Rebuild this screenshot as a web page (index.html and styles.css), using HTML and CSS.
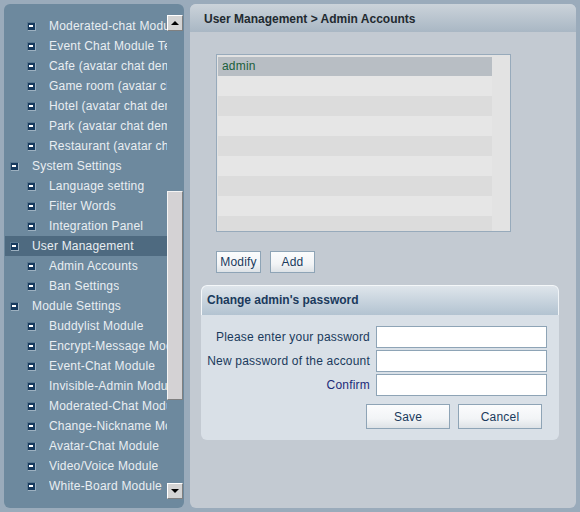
FILE: index.html
```html
<!DOCTYPE html>
<html>
<head>
<meta charset="utf-8">
<link rel="stylesheet" href="styles.css">
</head>
<body>
<div class="page">
  <div class="side">
    <div class="tree">
      <div class="row l2"><span class="ico"></span><span class="lbl">Moderated-chat Module Test</span></div>
      <div class="row l2"><span class="ico"></span><span class="lbl">Event Chat Module Test</span></div>
      <div class="row l2"><span class="ico"></span><span class="lbl">Cafe (avatar chat demo)</span></div>
      <div class="row l2"><span class="ico"></span><span class="lbl">Game room (avatar chat demo)</span></div>
      <div class="row l2"><span class="ico"></span><span class="lbl">Hotel (avatar chat demo)</span></div>
      <div class="row l2"><span class="ico"></span><span class="lbl">Park (avatar chat demo)</span></div>
      <div class="row l2"><span class="ico"></span><span class="lbl">Restaurant (avatar chat demo)</span></div>
      <div class="row l1"><span class="ico"></span><span class="lbl">System Settings</span></div>
      <div class="row l2"><span class="ico"></span><span class="lbl">Language setting</span></div>
      <div class="row l2"><span class="ico"></span><span class="lbl">Filter Words</span></div>
      <div class="row l2"><span class="ico"></span><span class="lbl">Integration Panel</span></div>
      <div class="row l1 sel"><span class="ico"></span><span class="lbl">User Management</span></div>
      <div class="row l2"><span class="ico"></span><span class="lbl">Admin Accounts</span></div>
      <div class="row l2"><span class="ico"></span><span class="lbl">Ban Settings</span></div>
      <div class="row l1"><span class="ico"></span><span class="lbl">Module Settings</span></div>
      <div class="row l2"><span class="ico"></span><span class="lbl">Buddylist Module</span></div>
      <div class="row l2"><span class="ico"></span><span class="lbl">Encrypt-Message Module</span></div>
      <div class="row l2"><span class="ico"></span><span class="lbl">Event-Chat Module</span></div>
      <div class="row l2"><span class="ico"></span><span class="lbl">Invisible-Admin Module</span></div>
      <div class="row l2"><span class="ico"></span><span class="lbl">Moderated-Chat Module</span></div>
      <div class="row l2"><span class="ico"></span><span class="lbl">Change-Nickname Module</span></div>
      <div class="row l2"><span class="ico"></span><span class="lbl">Avatar-Chat Module</span></div>
      <div class="row l2"><span class="ico"></span><span class="lbl">Video/Voice Module</span></div>
      <div class="row l2"><span class="ico"></span><span class="lbl">White-Board Module</span></div>
    </div>
    <div class="sbar">
      <div class="sbtn"><span class="arr up"></span></div>
      <div class="strack-top"></div>
      <div class="thumb"></div>
      <div class="strack-rest"></div>
      <div class="sbtn"><span class="arr down"></span></div>
    </div>
  </div>
  <div class="main">
    <div class="main-head">User Management &gt; Admin Accounts</div>
    <div class="main-body">
      <div class="listbox">
        <div class="lrow selrow">admin</div>
        <div class="lrow a"></div>
        <div class="lrow b"></div>
        <div class="lrow a"></div>
        <div class="lrow b"></div>
        <div class="lrow a"></div>
        <div class="lrow b"></div>
        <div class="lrow a"></div>
        <div class="lrow b last"></div>
      </div>
      <div class="btnrow">
        <button class="btn modify">Modify</button>
        <button class="btn add">Add</button>
      </div>
      <div class="box">
        <div class="box-head">Change admin's password</div>
        <div class="box-body">
          <div class="form">
            <label class="flabel">Please enter your password</label>
            <input class="finput" type="password">
            <label class="flabel">New password of the account</label>
            <input class="finput" type="password">
            <label class="flabel confirm">Confirm</label>
            <input class="finput" type="password">
          </div>
          <div class="actions">
            <button class="btn big">Save</button>
            <button class="btn big">Cancel</button>
          </div>
        </div>
      </div>
    </div>
  </div>
</div>
</body>
</html>
```

FILE: styles.css
```css
html, body {
  margin: 0;
  padding: 0;
}
body {
  background: #9aabbb;
  font-family: "Liberation Sans", Arial, sans-serif;
  font-size: 12px;
  width: 580px;
  height: 512px;
  overflow: hidden;
}
.page {
  display: flex;
  gap: 6px;
  padding: 4px;
  height: 504px;
}
.side {
  width: 180px;
  height: 504px;
  background: #6d899e;
  border-radius: 6px;
  display: flex;
  padding-left: 1px;
  box-sizing: border-box;
}
.tree {
  width: 162px;
  overflow: hidden;
  padding-top: 12px;
}
.row {
  height: 20px;
  display: flex;
  align-items: center;
  white-space: nowrap;
  color: #e9eef2;
  letter-spacing: 0.2px;
}
.row.sel {
  background: #4e6a80;
}
.ico {
  position: relative;
  flex: none;
  width: 8px;
  height: 8px;
  background: #173a5e;
  box-shadow: inset 1px 1px 0 #5a7890, 1px 1px 0 #9cb0c0;
  margin-top: -1px;
}
.ico::after {
  content: "";
  position: absolute;
  left: 2px;
  top: 3px;
  width: 4px;
  height: 2px;
  background: #ffffff;
}
.l1 .ico { margin-left: 5px; margin-right: 14px; }
.l2 .ico { margin-left: 22px; margin-right: 14px; }
.lbl { overflow: hidden; }

.sbar {
  width: 16px;
  display: flex;
  flex-direction: column;
  padding-top: 11px;
  padding-bottom: 9px;
}
.sbtn {
  height: 16px;
  background: #d4d4d4;
  box-sizing: border-box;
  border: 1px solid;
  border-color: #ffffff #808080 #808080 #ffffff;
  display: flex;
  align-items: center;
  justify-content: center;
}
.arr {
  width: 0;
  height: 0;
  border-left: 4px solid transparent;
  border-right: 4px solid transparent;
}
.arr.up { border-bottom: 4px solid #000; }
.arr.down { border-top: 4px solid #000; }
.strack-top { height: 160px; }
.thumb {
  height: 209px;
  background: #d4d2d4;
  box-sizing: border-box;
  border: 1px solid;
  border-color: #f4f4f4 #808080 #808080 #f4f4f4;
}
.strack-rest { flex: 1; }

.main {
  flex: 1;
  height: 504px;
  background: #c3cad2;
  border-radius: 6px;
  display: flex;
  flex-direction: column;
  overflow: hidden;
}
.main-head {
  height: 28px;
  box-sizing: border-box;
  padding-top: 1px;
  line-height: 28px;
  padding-left: 14px;
  font-weight: bold;
  font-size: 12px;
  color: #222a30;
  background: linear-gradient(#cbd3da, #a9b7c4);
}
.main-body {
  padding: 22px 0 0 26px;
}
.listbox {
  width: 295px;
  height: 178px;
  box-sizing: border-box;
  border: 1px solid #97aabb;
  background: #e3e3e3;
  padding: 2px 18px 0 1px;
  overflow: hidden;
}
.lrow {
  height: 20px;
  line-height: 19px;
  padding-left: 4px;
  color: #1b5e3b;
  letter-spacing: 0.2px;
}
.selrow { background: #b8bec4; height: 19px; }
.lrow.a { background: #e6e6e6; }
.lrow.b { background: #dcdcdc; }

.btnrow {
  display: flex;
  gap: 9px;
  margin-top: 19px;
}
.btn {
  font-family: "Liberation Sans", Arial, sans-serif;
  font-size: 12px;
  letter-spacing: 0.2px;
  color: #1a3a5c;
  background: linear-gradient(#fbfcfd 0%, #f2f4f6 60%, #dde2e6 100%);
  border: 1px solid #8ea4b6;
  padding: 0;
  height: 22px;
}
.btn.modify { width: 45px; }
.btn.add { width: 45px; }

.box {
  margin-top: 12px;
  margin-left: -15px;
  width: 358px;
  height: 155px;
  border-radius: 6px;
  overflow: hidden;
  background: #d9e0e7;
  display: flex;
  flex-direction: column;
}
.box-head {
  height: 30px;
  box-sizing: border-box;
  line-height: 29px;
  padding-left: 5px;
  font-weight: bold;
  color: #1a3a5c;
  background: linear-gradient(#dee5eb, #b3c3d1);
  border-top: 1px solid #f4f7f9;
  border-left: 1px solid #f4f7f9;
  border-right: 1px solid #f0f4f7;
  border-radius: 6px 6px 0 0;
}
.box-body {
  padding: 11px 12px 0 0;
}
.form {
  display: grid;
  grid-template-columns: 1fr 171px;
  column-gap: 6px;
  row-gap: 2px;
  align-items: center;
}
.flabel {
  text-align: right;
  color: #1a3a5c;
  white-space: nowrap;
  letter-spacing: 0.2px;
}
.flabel.confirm { color: #1c2a78; }
.finput {
  height: 22px;
  box-sizing: border-box;
  border: 1px solid #8ea4b6;
  background: #ffffff;
  margin: 0;
  padding: 0 3px;
}
.actions {
  display: flex;
  justify-content: flex-end;
  gap: 8px;
  margin-top: 8px;
  padding-right: 5px;
}
.btn.big {
  width: 84px;
  height: 25px;
}
```
